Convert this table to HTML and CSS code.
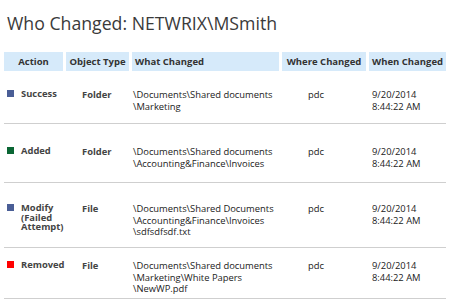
FILE: index.html
```html
<!DOCTYPE html>
<html lang="en">
<head>
    <meta charset="UTF-8">
    <title>Who Changed</title>
    <link rel="stylesheet" href="styles.css">
</head>
<body>

    <h1>Who Changed: NETWRIX\MSmith</h1>

    <div class="report">
        <!-- Header -->
        <div class="row head">
            <div class="th center">Action</div>
            <div class="th center">Object Type</div>
            <div class="th left">What Changed</div>
            <div class="th center">Where Changed</div>
            <div class="th center">When Changed</div>
        </div>

        <!-- Changes -->
        <div class="row item r1">
            <div class="action"><span class="mark blue"></span><span>Success</span></div>
            <div class="type">Folder</div>
            <div class="what">\Documents\Shared documents<br>\Marketing</div>
            <div class="where">pdc</div>
            <div class="when">9/20/2014<br>8:44:22 AM</div>
        </div>

        <div class="row item r2">
            <div class="action"><span class="mark green"></span><span>Added</span></div>
            <div class="type">Folder</div>
            <div class="what">\Documents\Shared documents<br>\Accounting&amp;Finance\Invoices</div>
            <div class="where">pdc</div>
            <div class="when">9/20/2014<br>8:44:22 AM</div>
        </div>

        <div class="row item r3">
            <div class="action"><span class="mark blue"></span><span>Modify<br>(Failed<br>Attempt)</span></div>
            <div class="type">File</div>
            <div class="what">\Documents\Shared Documents<br>\Accounting&amp;Finance\Invoices<br>\sdfsdfsdf.txt</div>
            <div class="where">pdc</div>
            <div class="when">9/20/2014<br>8:44:22 AM</div>
        </div>

        <div class="row item r4">
            <div class="action"><span class="mark red"></span><span>Removed</span></div>
            <div class="type">File</div>
            <div class="what">\Documents\Shared documents<br>\Marketing\White Papers<br>\NewWP.pdf</div>
            <div class="where">pdc</div>
            <div class="when">9/20/2014<br>8:44:22 AM</div>
        </div>
    </div>

</body>
</html>
```

FILE: styles.css
```css
/* General Styling */
body {
    margin: 0;
    font-family: 'Open Sans', 'Noto Sans', sans-serif;
    color: #333;
    background: white;
}

h1 {
    margin: 0;
    padding: 11px 0 0 7px;
    height: 52px;
    box-sizing: border-box;
    font-size: 17.7px;
    font-weight: normal;
    line-height: 24px;
    color: #3a3a3a;
}

/* Report grid */
.report {
    margin-left: 4px;
    width: 442px;
}

.row {
    display: grid;
    grid-template-columns: 59px 63px 147px 84px 77px;
    column-gap: 3px;
}

.th {
    background: #d6eafa;
    height: 19px;
    line-height: 19px;
    font-size: 9.5px;
    font-weight: bold;
    color: #333;
    white-space: nowrap;
}

.th.center { text-align: center; }
.th.left { padding-left: 3px; }

.item {
    box-sizing: border-box;
    border-bottom: 1px solid #cfcfcf;
    font-size: 9.4px;
    line-height: 11.5px;
    color: #222;
}

.r1 { height: 53px; padding-top: 18px; }
.r2 { height: 59px; padding-top: 22px; }
.r3 { height: 65px; padding-top: 20px; }
.r4 { height: 51px; padding-top: 12px; }

.action {
    display: flex;
    align-items: flex-start;
    padding-left: 3px;
    font-weight: bold;
    line-height: 9.5px;
    color: #444;
}

.mark {
    flex: none;
    width: 7px;
    height: 7px;
    margin: 1px 7px 0 0;
}

.blue { background: #4a5e96; }
.green { background: #0a6634; }
.red { background: #ff0000; }

.type {
    padding-left: 16px;
    font-weight: bold;
    color: #444;
}

.what { padding-left: 1px; white-space: nowrap; }
.where { padding-left: 26px; }
.when { padding-left: 3px; }
```
